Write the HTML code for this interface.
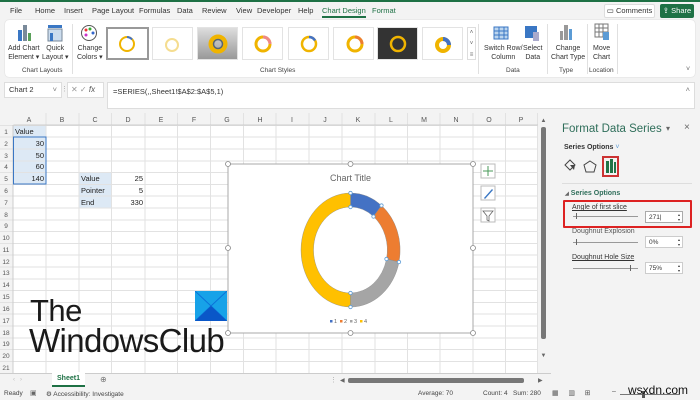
<!DOCTYPE html>
<html><head><meta charset="utf-8"><style>
*{margin:0;padding:0;box-sizing:border-box}
body{width:700px;height:400px;overflow:hidden;background:#f3f3f3;font-family:"Liberation Sans",sans-serif;font-size:8px;color:#333;position:relative}
.a{position:absolute}
.t{position:absolute;white-space:nowrap}
.thumb{position:absolute;top:27px;width:41px;height:33px;background:#fff;border:1px solid #e3e3e3}
.lbl{position:absolute;top:67px;font-size:6.5px;color:#444;white-space:nowrap}
.btn{position:absolute;font-size:7px;color:#333;text-align:center;line-height:9px;white-space:nowrap}
</style></head><body>
<div class="a" style="left:0;top:0;width:700px;height:2px;background:#1e7145"></div>
<div class="t" style="top:6px;left:10px;font-size:7.5px;color:#333">File</div>
<div class="t" style="top:6px;left:35px;font-size:7.5px">Home</div>
<div class="t" style="top:6px;left:64px;font-size:7.5px">Insert</div>
<div class="t" style="top:6px;left:92px;font-size:7.5px">Page Layout</div>
<div class="t" style="top:6px;left:139px;font-size:7.5px">Formulas</div>
<div class="t" style="top:6px;left:177px;font-size:7.5px">Data</div>
<div class="t" style="top:6px;left:202px;font-size:7.5px">Review</div>
<div class="t" style="top:6px;left:236px;font-size:7.5px">View</div>
<div class="t" style="top:6px;left:257px;font-size:7.5px">Developer</div>
<div class="t" style="top:6px;left:298px;font-size:7.5px">Help</div>
<div class="t" style="top:6px;left:322px;font-size:7.5px;color:#1e7145;border-bottom:2px solid #1e7145;padding-bottom:1px">Chart Design</div>
<div class="t" style="top:6px;left:372px;font-size:7.5px;color:#1e7145">Format</div>
<div class="a" style="left:604px;top:4px;width:51px;height:14px;background:#fff;border:1px solid #ddd;border-radius:2px;font-size:7.5px;line-height:12px;text-align:center">▭ Comments</div>
<div class="a" style="left:660px;top:4px;width:34px;height:14px;background:#1e7145;border-radius:2px;color:#fff;font-size:7.5px;line-height:14px;text-align:center">⇪ Share</div>
<div class="a" style="left:5px;top:20px;width:690px;height:57px;background:#fff;border-radius:4px;box-shadow:0 0 1px #bbb"></div>
<svg class="a" style="left:16px;top:24px" width="18" height="18"><rect x="2" y="6" width="4" height="11" fill="#3a77c4"/><rect x="7" y="1" width="4" height="16" fill="#7a8a9a"/><rect x="12" y="9" width="3" height="8" fill="#5aa05a"/></svg>
<svg class="a" style="left:46px;top:24px" width="18" height="18"><rect x="2" y="1" width="14" height="3" fill="#3a77c4"/><rect x="2" y="5" width="14" height="12" fill="#cde" stroke="#789"/><rect x="4" y="9" width="3" height="8" fill="#3a77c4"/></svg>
<svg class="a" style="left:80px;top:24px" width="18" height="18"><circle cx="9" cy="9" r="7.5" fill="#fff" stroke="#555"/><circle cx="6" cy="6" r="1.5" fill="#e33"/><circle cx="10" cy="5" r="1.5" fill="#3a3"/><circle cx="13" cy="9" r="1.5" fill="#36c"/><circle cx="6" cy="11" r="1.5" fill="#c3c"/></svg>
<div class="btn" style="left:8px;top:44px">Add Chart<br>Element ▾</div>
<div class="btn" style="left:42px;top:44px">Quick<br>Layout ▾</div>
<div class="btn" style="left:77px;top:44px">Change<br>Colors ▾</div>
<div class="lbl" style="left:22px">Chart Layouts</div>
<div class="a" style="left:72px;top:24px;width:1px;height:50px;background:#e0e0e0"></div>
<div class="thumb" style="left:106px;width:43px;border:2px solid #999"></div>
<div class="thumb" style="left:152px"></div>
<div class="thumb" style="left:197px;background:linear-gradient(#ddd,#999)"></div>
<div class="thumb" style="left:242px"></div>
<div class="thumb" style="left:288px"></div>
<div class="thumb" style="left:333px"></div>
<div class="thumb" style="left:377px;background:#333"></div>
<div class="thumb" style="left:422px"></div>
<svg class="a" style="left:106px;top:27px" width="360" height="33">
<g fill="none" stroke-width="2"><circle cx="21" cy="17" r="7" stroke="#f0b400"/><path d="M21 10a7 7 0 0 1 5 2.5" stroke="#4472c4"/></g>
<circle cx="66" cy="18" r="6" fill="none" stroke="#f5dd90" stroke-width="2"/>
<circle cx="112" cy="17" r="7" fill="none" stroke="#f0b400" stroke-width="5"/><circle cx="112" cy="17" r="4.5" fill="none" stroke="#567" stroke-width="1.5"/>
<circle cx="157" cy="17" r="7" fill="none" stroke="#f0b400" stroke-width="3"/><path d="M157 10a7 7 0 0 1 7 7" fill="none" stroke="#e88" stroke-width="3"/>
<circle cx="203" cy="17" r="7" fill="none" stroke="#f0b400" stroke-width="2.5"/><path d="M203 10a7 7 0 0 1 6 3.5" fill="none" stroke="#4472c4" stroke-width="2.5"/>
<circle cx="249" cy="17" r="7" fill="none" stroke="#f0b400" stroke-width="3"/><path d="M249 10a7 7 0 0 1 7 7" fill="none" stroke="#ed7d31" stroke-width="3"/>
<circle cx="292" cy="17" r="7" fill="none" stroke="#f0b400" stroke-width="2.5"/>
<circle cx="337" cy="18" r="6" fill="none" stroke="#f0b400" stroke-width="4"/><path d="M337 12a6 6 0 0 1 6 6" fill="none" stroke="#4472c4" stroke-width="4"/>
</svg>
<div class="a" style="left:467px;top:27px;width:9px;height:33px;border:1px solid #ddd;font-size:6px;text-align:center;line-height:11px;color:#666">˄<br>˅<br>≡</div>
<div class="lbl" style="left:260px">Chart Styles</div>
<div class="a" style="left:478px;top:24px;width:1px;height:50px;background:#e0e0e0"></div>
<svg class="a" style="left:493px;top:24px" width="16" height="16"><rect x="1" y="3" width="14" height="12" fill="#bcd5ee" stroke="#3a77c4"/><path d="M1 7h14M1 11h14M6 3v12M11 3v12" stroke="#3a77c4"/></svg>
<svg class="a" style="left:524px;top:24px" width="16" height="18"><rect x="1" y="2" width="12" height="12" fill="#3a77c4"/><rect x="9" y="8" width="6" height="9" fill="#aac"/></svg>
<div class="btn" style="left:484px;top:44px">Switch Row/<br>Column</div>
<div class="btn" style="left:523px;top:44px">Select<br>Data</div>
<div class="lbl" style="left:506px">Data</div>
<div class="a" style="left:547px;top:24px;width:1px;height:50px;background:#e0e0e0"></div>
<svg class="a" style="left:558px;top:23px" width="16" height="18"><rect x="2" y="8" width="3" height="9" fill="#999"/><rect x="6" y="2" width="4" height="15" fill="#999"/><rect x="11" y="6" width="3" height="11" fill="#5b9bd5"/></svg>
<div class="btn" style="left:551px;top:44px">Change<br>Chart Type</div>
<div class="lbl" style="left:559px">Type</div>
<div class="a" style="left:587px;top:24px;width:1px;height:50px;background:#e0e0e0"></div>
<svg class="a" style="left:594px;top:23px" width="16" height="18"><rect x="1" y="1" width="13" height="13" fill="#fff" stroke="#777"/><path d="M1 5h13M1 9h13M5 1v13M9 1v13" stroke="#777"/><rect x="9" y="9" width="6" height="8" fill="#5b9bd5"/></svg>
<div class="btn" style="left:593px;top:44px">Move<br>Chart</div>
<div class="lbl" style="left:589px">Location</div>
<div class="a" style="left:617px;top:24px;width:1px;height:50px;background:#e0e0e0"></div>
<div class="t" style="left:686px;top:66px;font-size:7px;color:#666">˅</div>
<div class="a" style="left:4px;top:82px;width:58px;height:16px;background:#fff;border:1px solid #ddd;font-size:7.5px;line-height:14px;padding-left:4px">Chart 2<span style="position:absolute;right:4px;color:#777">˅</span></div>
<div class="t" style="left:61px;top:85px;font-size:7px;color:#aaa">⋮</div>
<div class="a" style="left:67px;top:82px;width:37px;height:16px;background:#fff;border:1px solid #ddd;font-size:8px;line-height:14px;color:#999;padding-left:3px">✕ ✓ <i style="color:#555">fx</i></div>
<div class="a" style="left:107px;top:82px;width:588px;height:27px;background:#fff;border:1px solid #ddd;font-size:7.5px;padding:4px 5px">=SERIES(,,Sheet1!$A$2:$A$5,1)<span style="position:absolute;right:4px;top:2px;color:#777">˄</span></div>
<svg class="a" style="left:0;top:113px" width="550" height="260" font-family="Liberation Sans" font-size="7">
<rect x="0" y="0" width="550" height="260" fill="#fff"/>
<rect x="0" y="0" width="540" height="12" fill="#f3f3f3"/>
<rect x="0" y="0" width="13" height="260" fill="#f3f3f3"/>
<rect x="13" y="12" width="33" height="59" fill="#dde9f5"/>
<rect x="79" y="59" width="33" height="36" fill="#dde9f5"/>
<g stroke="#e2e2e2" stroke-width="1">
<path d="M46 0v260M79 0v260M111.5 0v260M145 0v260M177.5 0v260M210.5 0v260M243.5 0v260M276 0v260M309 0v260M342 0v260M375 0v260M407.5 0v260M440 0v260M473 0v260M505.5 0v260M537.5 0v260"/>
<path d="M0 12.5h540M0 24h540M0 36h540M0 48h540M0 59.5h540M0 71.5h540M0 83h540M0 95h540M0 107h540M0 118.5h540M0 130.5h540M0 142h540M0 154h540M0 166h540M0 177.5h540M0 189.5h540M0 201h540M0 213h540M0 225h540M0 236.5h540M0 248.5h540"/>
</g>
<path d="M13 12v248M13.5 12h527" stroke="#ccc"/>
<g fill="#555" text-anchor="middle">
<text x="29" y="9">A</text><text x="62" y="9">B</text><text x="95" y="9">C</text><text x="128" y="9">D</text><text x="161" y="9">E</text><text x="194" y="9">F</text><text x="227" y="9">G</text><text x="260" y="9">H</text><text x="292" y="9">I</text><text x="325" y="9">J</text><text x="358" y="9">K</text><text x="391" y="9">L</text><text x="424" y="9">M</text><text x="456" y="9">N</text><text x="489" y="9">O</text><text x="521" y="9">P</text>
<g font-size="6.5"><text x="6" y="21">1</text><text x="6" y="33">2</text><text x="6" y="45">3</text><text x="6" y="56">4</text><text x="6" y="68">5</text><text x="6" y="80">6</text><text x="6" y="92">7</text><text x="6" y="104">8</text><text x="6" y="115">9</text><text x="6" y="127">10</text><text x="6" y="139">11</text><text x="6" y="151">12</text><text x="6" y="162">13</text><text x="6" y="174">14</text><text x="6" y="186">15</text><text x="6" y="198">16</text><text x="6" y="210">17</text><text x="6" y="222">18</text><text x="6" y="233">19</text><text x="6" y="245">20</text><text x="6" y="257">21</text></g>
</g>
<g fill="#222" font-size="7.5">
<text x="15" y="21">Value</text>
<g text-anchor="end"><text x="44" y="33">30</text><text x="44" y="45">50</text><text x="44" y="56">60</text><text x="44" y="68">140</text>
<text x="143" y="68">25</text><text x="143" y="80">5</text><text x="143" y="92">330</text></g>
<text x="81" y="68">Value</text><text x="81" y="80">Pointer</text><text x="81" y="92">End</text>
</g>
<rect x="13.5" y="24" width="32.5" height="47" fill="none" stroke="#3a77c4" stroke-width="1"/>
<rect x="538" y="0" width="12" height="260" fill="#f3f3f3"/>
<rect x="541" y="14" width="5" height="212" rx="2" fill="#777"/>
<text x="543.5" y="9" font-size="6" text-anchor="middle" fill="#666">▲</text>
<text x="543.5" y="244" font-size="6" text-anchor="middle" fill="#666">▼</text>
</svg>
<div class="t" style="left:30px;top:293px;font-size:31px;color:#1a1a1a;letter-spacing:-0.5px">The</div>
<div class="t" style="left:29px;top:322px;font-size:33px;color:#1a1a1a;letter-spacing:-0.6px">WindowsClub</div>
<svg class="a" style="left:195px;top:291px" width="32" height="30"><rect width="32" height="30" fill="#17a2e8"/><path d="M0 0L32 30M32 0L0 30" stroke="#0b70d8" stroke-width="1"/><path d="M16 15L0 30h32z" fill="#0a57c8"/></svg>
<svg class="a" style="left:220px;top:155px" width="290" height="185" font-family="Liberation Sans">
<rect x="8" y="9" width="245" height="169" fill="#fff" stroke="#aaa"/>
<text x="130.5" y="26" text-anchor="middle" font-size="9" fill="#666">Chart Title</text>
<g transform="translate(130.5,95)" stroke="#888" stroke-width="0.4">
<path d="M0,-57 A49.5,57 0 0 1 31,-44.5 L23,-33.5 A37,43 0 0 0 0,-43Z" fill="#4472c4"/>
<path d="M31,-44.5 A49.5,57 0 0 1 48.5,12 L36,9 A37,43 0 0 0 23,-33.5Z" fill="#ed7d31"/>
<path d="M48.5,12 A49.5,57 0 0 1 0,57 L0,43 A37,43 0 0 0 36,9Z" fill="#a5a5a5"/>
<path d="M0,57 A49.5,57 0 0 1 0,-57 L0,-43 A37,43 0 0 0 0,43Z" fill="#ffc000"/>
<g fill="#fff" stroke="#5b9bd5" stroke-width="0.8"><circle cx="0" cy="-57" r="1.7"/><circle cx="0" cy="-43" r="1.7"/><circle cx="31" cy="-44.5" r="1.7"/><circle cx="23" cy="-33.5" r="1.7"/><circle cx="48.5" cy="12" r="1.7"/><circle cx="36" cy="9" r="1.7"/><circle cx="0" cy="57" r="1.7"/><circle cx="0" cy="43" r="1.7"/></g>
</g>
<g font-size="5.5" fill="#666"><rect x="110" y="165" width="2.5" height="2.5" fill="#4472c4"/><text x="114" y="168">1</text><rect x="120" y="165" width="2.5" height="2.5" fill="#ed7d31"/><text x="124" y="168">2</text><rect x="130" y="165" width="2.5" height="2.5" fill="#a5a5a5"/><text x="134" y="168">3</text><rect x="140" y="165" width="2.5" height="2.5" fill="#ffc000"/><text x="144" y="168">4</text></g>
<g fill="#fff" stroke="#888" stroke-width="0.8"><circle cx="8" cy="9" r="2.5"/><circle cx="130.5" cy="9" r="2.5"/><circle cx="253" cy="9" r="2.5"/><circle cx="8" cy="93" r="2.5"/><circle cx="253" cy="93" r="2.5"/><circle cx="8" cy="178" r="2.5"/><circle cx="130.5" cy="178" r="2.5"/><circle cx="253" cy="178" r="2.5"/></g>
<g fill="#fff" stroke="#bbb"><rect x="261" y="9" width="14" height="14"/><rect x="261" y="31" width="14" height="14"/><rect x="261" y="53" width="14" height="14"/></g>
<path d="M268 11v10M263 16h10" stroke="#4a9a5a" stroke-width="1"/>
<path d="M264 43l8-9 1 1-8 9z" fill="#3a77c4"/>
<path d="M263 56h10l-4 5v5l-2-1v-4z" fill="none" stroke="#666" stroke-width="0.8"/>
</svg>
<div class="a" style="left:551px;top:113px;width:149px;height:262px;background:#f3f3f3"></div>
<div class="t" style="left:562px;top:123px;font-size:11.5px;color:#2f6e5a">Format Data Series</div>
<div class="t" style="left:666px;top:124px;font-size:8px;color:#666">▾</div>
<div class="t" style="left:684px;top:122px;font-size:10px;color:#666">×</div>
<div class="t" style="left:564px;top:144px;font-size:7px;font-weight:bold;color:#333">Series Options <span style="color:#5b9bd5;font-weight:normal">˅</span></div>
<svg class="a" style="left:562px;top:156px" width="60" height="22"><path d="M3 9l5-5 5 5-5 5z" fill="none" stroke="#444"/><path d="M8 9l5 0-1 5" fill="#444"/><path d="M28 5l6 4-2 7h-8l-2-7z" fill="none" stroke="#444"/><rect x="41" y="1" width="15" height="19" fill="none" stroke="#c33" stroke-width="2"/><rect x="44" y="5" width="3" height="12" fill="#217346"/><rect x="48" y="3" width="3" height="14" fill="#217346"/><rect x="52" y="6" width="2" height="11" fill="#217346"/></svg>
<div class="a" style="left:562px;top:183px;width:130px;height:1px;background:#ddd"></div>
<div class="t" style="left:565px;top:190px;font-size:7px;font-weight:bold;color:#2f6e5a"><span style="font-size:5px;color:#666">◢</span> Series Options</div>
<div class="a" style="left:563px;top:200px;width:129px;height:28px;border:2px solid #d22;border-radius:1px"></div>
<div class="t" style="left:572px;top:204px;font-size:7px;text-decoration:underline;color:#333">Angle of first slice</div>
<div class="a" style="left:573px;top:216px;width:65px;height:1px;background:#999"></div>
<div class="a" style="left:576px;top:213px;width:1px;height:6px;background:#666"></div>
<div class="a" style="left:645px;top:211px;width:38px;height:12px;background:#fff;border:1px solid #aaa;font-size:6.5px;padding:2px 3px">271|<span style="position:absolute;right:2px;top:0;font-size:4px;line-height:5px">▴<br>▾</span></div>
<div class="t" style="left:572px;top:228px;font-size:7px;color:#555">Doughnut Explosion</div>
<div class="a" style="left:573px;top:242px;width:65px;height:1px;background:#999"></div>
<div class="a" style="left:576px;top:239px;width:1px;height:6px;background:#666"></div>
<div class="a" style="left:645px;top:236px;width:38px;height:12px;background:#fff;border:1px solid #ccc;font-size:6.5px;padding:2px 3px">0%<span style="position:absolute;right:2px;top:0;font-size:4px;line-height:5px">▴<br>▾</span></div>
<div class="t" style="left:572px;top:254px;font-size:7px;text-decoration:underline;color:#333">Doughnut Hole Size</div>
<div class="a" style="left:573px;top:268px;width:65px;height:1px;background:#999"></div>
<div class="a" style="left:630px;top:265px;width:1px;height:6px;background:#666"></div>
<div class="a" style="left:645px;top:262px;width:38px;height:12px;background:#fff;border:1px solid #ccc;font-size:6.5px;padding:2px 3px">75%<span style="position:absolute;right:2px;top:0;font-size:4px;line-height:5px">▴<br>▾</span></div>
<div class="a" style="left:0;top:373px;width:551px;height:15px;background:#f3f3f3;border-top:1px solid #ccc"></div>
<div class="t" style="left:13px;top:377px;font-size:6px;color:#bbb">‹ &nbsp; ›</div>
<div class="a" style="left:52px;top:372px;width:33px;height:15px;background:#fff;border-bottom:2px solid #1e7145;font-size:7px;font-weight:bold;color:#1e7145;text-align:center;line-height:13px">Sheet1</div>
<div class="t" style="left:100px;top:375px;font-size:8px;color:#777">⊕</div>
<div class="t" style="left:330px;top:376px;font-size:7px;color:#aaa">⋮</div>
<div class="t" style="left:340px;top:377px;font-size:6px;color:#666">◀</div>
<div class="a" style="left:348px;top:378px;width:176px;height:5px;border-radius:2px;background:#777"></div>
<div class="t" style="left:538px;top:377px;font-size:6px;color:#666">▶</div>
<div class="a" style="left:0;top:388px;width:700px;height:12px;background:#f3f3f3"></div>
<div class="t" style="left:4px;top:390px;font-size:6.5px;color:#444">Ready</div>
<div class="t" style="left:30px;top:389px;font-size:7px;color:#666">▣</div>
<div class="t" style="left:46px;top:390px;font-size:6.5px;color:#444">⚙ Accessibility: Investigate</div>
<div class="t" style="left:418px;top:390px;font-size:6.5px;color:#444">Average: 70</div>
<div class="t" style="left:483px;top:390px;font-size:6.5px;color:#444">Count: 4</div>
<div class="t" style="left:513px;top:390px;font-size:6.5px;color:#444">Sum: 280</div>
<div class="t" style="left:552px;top:389px;font-size:7px;color:#555">▦ &nbsp;&nbsp;&nbsp; ▥ &nbsp;&nbsp;&nbsp; ⊞</div>
<div class="t" style="left:612px;top:388px;font-size:7px;color:#555">– </div>
<div class="a" style="left:620px;top:394px;width:60px;height:1px;background:#777"></div>
<div class="a" style="left:642px;top:391px;width:3px;height:7px;background:#555"></div>
<div class="t" style="left:628px;top:383px;font-size:12px;color:#111">wsxdn.com</div>
</body></html>
